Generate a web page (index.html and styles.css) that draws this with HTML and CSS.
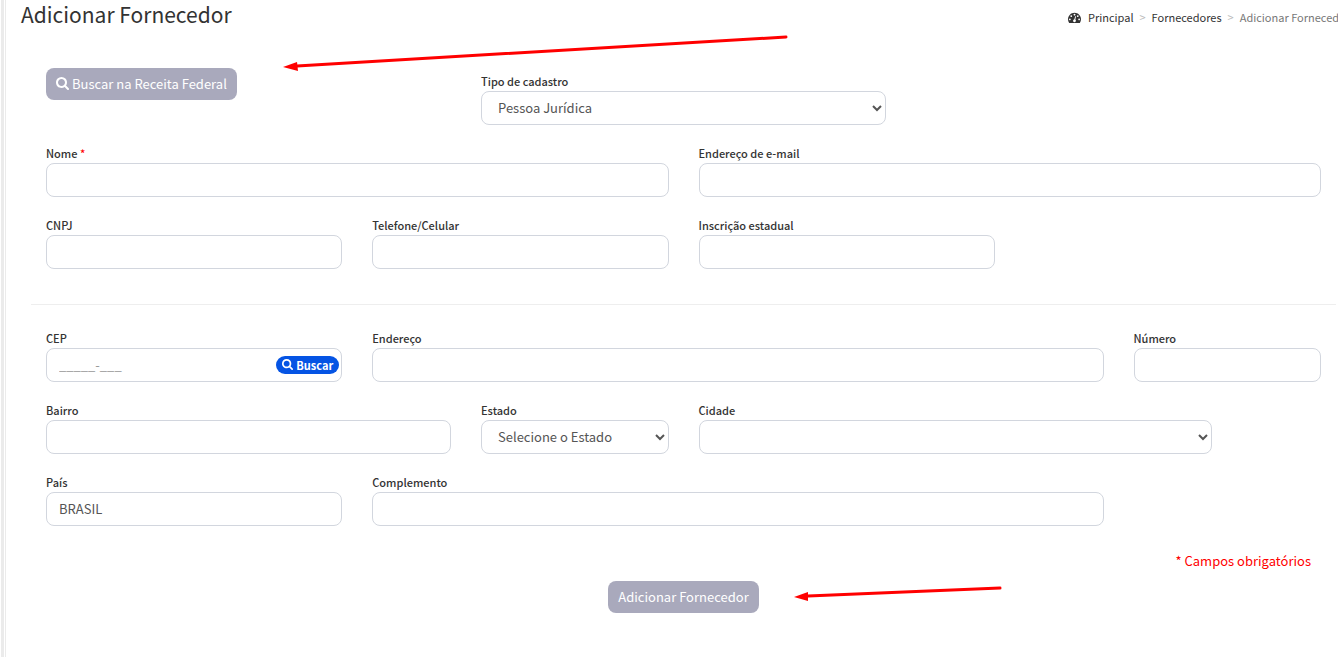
FILE: index.html
```html
<!DOCTYPE html>
<html lang="pt-BR">
<head>
  <meta charset="UTF-8">
  <title>Adicionar Fornecedor</title>
  <link rel="stylesheet" href="styles.css">
</head>
<body>

  <svg class="sprite" aria-hidden="true">
    <symbol id="icon-search" viewBox="0 0 1664 1664">
      <path d="M1152 704q0-185-131.500-316.500T704 256 387.500 387.500 256 704t131.500 316.500T704 1152t316.500-131.500T1152 704zm512 832q0 52-38 90t-90 38q-54 0-90-38l-343-342q-179 124-399 124-143 0-273.500-55.500t-225-150-150-225T0 704t55.500-273.500 150-225 225-150T704 0t273.500 55.500 225 150 150 225T1408 704q0 220-124 399l343 343q37 37 37 90z"/>
    </symbol>
    <symbol id="icon-dashboard" viewBox="0 0 1792 1792">
      <path d="M384 1152q0-53-37.500-90.500t-90.500-37.500-90.500 37.500-37.500 90.500 37.500 90.500 90.500 37.500 90.500-37.500 37.500-90.500zm192-448q0-53-37.500-90.500t-90.500-37.500-90.500 37.500-37.500 90.500 37.500 90.500 90.500 37.500 90.500-37.500 37.500-90.500zm428 481l101-382q6-26-7.500-48.500t-38.500-29.500-48 6.500-30 39.500l-101 382q-60 5-107 43.500t-63 98.500q-20 77 20 146t117 89 146-20 89-117q16-60-6-117t-72-91zm660-33q0-53-37.500-90.500t-90.500-37.500-90.500 37.500-37.500 90.500 37.500 90.500 90.500 37.500 90.500-37.500 37.500-90.500zm-640-640q0-53-37.500-90.500t-90.500-37.500-90.500 37.500-37.500 90.500 37.500 90.500 90.500 37.500 90.500-37.500 37.500-90.500zm448 192q0-53-37.500-90.500t-90.500-37.500-90.500 37.500-37.500 90.500 37.500 90.500 90.500 37.500 90.500-37.500 37.500-90.500zm320 448q0 261-141 483-19 29-54 29h-1402q-35 0-54-29-141-221-141-483 0-182 71-348t191-286 286-191 348-71 348 71 286 191 191 286 71 348z"/>
    </symbol>
  </svg>

  <div class="content-wrapper">
    <header class="content-header">
      <h1>Adicionar Fornecedor</h1>
      <nav class="breadcrumb" aria-label="Navegação">
        <a href="#"><svg class="icon icon-dashboard" aria-hidden="true"><use href="#icon-dashboard"/></svg>Principal</a>
        <a href="#">Fornecedores</a>
        <span class="active">Adicionar Fornecedor</span>
      </nav>
    </header>

    <form class="supplier-form">
      <div class="row row-top">
        <div class="col-4">
          <button type="button" class="btn"><svg class="icon icon-search" aria-hidden="true"><use href="#icon-search"/></svg>Buscar na Receita Federal</button>
        </div>
        <div class="col-4 field">
          <label for="tipo">Tipo de cadastro</label>
          <select id="tipo" class="form-control">
            <option>Pessoa Jurídica</option>
            <option>Pessoa Física</option>
          </select>
        </div>
      </div>

      <div class="row">
        <div class="col-6 field">
          <label for="nome">Nome <span class="required">*</span></label>
          <input type="text" id="nome" class="form-control">
        </div>
        <div class="col-6 field">
          <label for="email">Endereço de e-mail</label>
          <input type="email" id="email" class="form-control">
        </div>
      </div>

      <div class="row">
        <div class="col-3 field">
          <label for="cnpj">CNPJ</label>
          <input type="text" id="cnpj" class="form-control">
        </div>
        <div class="col-3 field">
          <label for="telefone">Telefone/Celular</label>
          <input type="text" id="telefone" class="form-control">
        </div>
        <div class="col-3 field">
          <label for="inscricao">Inscrição estadual</label>
          <input type="text" id="inscricao" class="form-control">
        </div>
      </div>

      <hr>

      <div class="row">
        <div class="col-3 field">
          <label for="cep">CEP</label>
          <div class="input-wrap">
            <input type="text" id="cep" class="form-control" placeholder="_____-___">
            <button type="button" class="btn-cep"><svg class="icon icon-search" aria-hidden="true"><use href="#icon-search"/></svg>Buscar</button>
          </div>
        </div>
        <div class="col-7 field">
          <label for="endereco">Endereço</label>
          <input type="text" id="endereco" class="form-control">
        </div>
        <div class="col-2 field">
          <label for="numero">Número</label>
          <input type="text" id="numero" class="form-control">
        </div>
      </div>

      <div class="row">
        <div class="col-4 field">
          <label for="bairro">Bairro</label>
          <input type="text" id="bairro" class="form-control">
        </div>
        <div class="col-2 field">
          <label for="estado">Estado</label>
          <select id="estado" class="form-control">
            <option>Selecione o Estado</option>
          </select>
        </div>
        <div class="col-5 field">
          <label for="cidade">Cidade</label>
          <select id="cidade" class="form-control">
            <option></option>
          </select>
        </div>
      </div>

      <div class="row">
        <div class="col-3 field">
          <label for="pais">País</label>
          <input type="text" id="pais" class="form-control" value="BRASIL">
        </div>
        <div class="col-7 field">
          <label for="complemento">Complemento</label>
          <input type="text" id="complemento" class="form-control">
        </div>
      </div>

      <p class="note">* Campos obrigatórios</p>

      <div class="actions">
        <button type="submit" class="btn">Adicionar Fornecedor</button>
      </div>
    </form>

    <svg class="arrow arrow-search" viewBox="0 0 506 38" aria-hidden="true">
      <path d="M14 32L503 3" stroke="#f00" stroke-width="3" stroke-linecap="round"/>
      <path d="M0 33L14 28L15 37Z" fill="#f00"/>
    </svg>
    <svg class="arrow arrow-submit" viewBox="0 0 210 18" aria-hidden="true">
      <path d="M14 11L206 3" stroke="#f00" stroke-width="3" stroke-linecap="round"/>
      <path d="M0 12L14 7L14 16Z" fill="#f00"/>
    </svg>
  </div>

</body>
</html>
```
FILE: styles.css
```css
* {
  box-sizing: border-box;
}

body {
  margin: 0 0 0 1px;
  background: #fff;
  border-left: 3px solid #ebebeb;
  color: #333;
  font-family: "Noto Sans CJK JP", "Open Sans", sans-serif;
  font-size: 13px;
  line-height: 18px;
}

.sprite {
  display: none;
}

.icon {
  fill: currentColor;
  flex: none;
}

.content-wrapper {
  position: relative;
  min-height: 100vh;
  margin-left: 1px;
  border-left: 1px solid #ebebeb;
  overflow: hidden;
}

.content-header {
  display: flex;
  justify-content: space-between;
  align-items: flex-start;
  height: 32px;
  padding-left: 15px;
}

h1 {
  margin: 0;
  font-size: 21px;
  font-weight: normal;
  line-height: 28px;
}

.breadcrumb {
  display: flex;
  margin-right: -12px;
  padding-top: 8px;
  font-size: 11px;
  white-space: nowrap;
}

.breadcrumb a {
  display: flex;
  align-items: center;
  color: #333;
  text-decoration: none;
}

.breadcrumb a::after {
  content: ">";
  padding: 0 6px;
  color: #bbb;
}

.breadcrumb .active {
  color: #777;
}

.icon-dashboard {
  width: 13px;
  height: 13px;
  margin-right: 7px;
}

.supplier-form {
  margin: 36px 2px 0 25px;
}

.row {
  display: grid;
  grid-template-columns: repeat(12, 1fr);
  column-gap: 30px;
  margin-bottom: 20px;
  padding: 0 15px;
}

.row-top .field {
  padding-top: 5px;
}

.col-2 { grid-column: span 2; }
.col-3 { grid-column: span 3; }
.col-4 { grid-column: span 4; }
.col-5 { grid-column: span 5; }
.col-6 { grid-column: span 6; }
.col-7 { grid-column: span 7; }

.field {
  min-width: 0;
}

label {
  display: block;
  margin-bottom: 2px;
  font-size: 11px;
  font-weight: 500;
  line-height: 16px;
}

.required,
.note {
  color: #f00;
}

.form-control {
  display: block;
  width: 100%;
  height: 34px;
  padding: 5px 12px 7px;
  border: 1px solid #d2d6de;
  border-radius: 8px;
  background: #fff;
  color: #555;
  font-family: inherit;
  font-size: 13px;
}

.form-control::placeholder {
  color: #999;
}

hr {
  margin: 35px 0 25px;
  border: 0;
  border-top: 1px solid #eee;
}

.input-wrap {
  position: relative;
}

.btn {
  display: inline-flex;
  align-items: center;
  height: 32px;
  padding: 0 10px 2px;
  border: 0;
  border-radius: 8px;
  background: #a9a9bc;
  color: #fff;
  font-family: inherit;
  font-size: 13px;
}

.icon-search {
  width: 13px;
  height: 13px;
  margin-right: 3px;
}

.btn-cep {
  position: absolute;
  top: 8px;
  right: 3px;
  display: flex;
  align-items: center;
  height: 18px;
  padding: 0 6px 1px;
  border: 0;
  border-radius: 9px;
  background: #0554e4;
  color: #fff;
  font-family: inherit;
  font-size: 11px;
  font-weight: bold;
}

.btn-cep .icon-search {
  width: 11px;
  height: 11px;
}

.note {
  margin: 26px 25px 11px;
  text-align: right;
}

.actions {
  text-align: center;
}

/* red arrows over the page */
.arrow {
  position: absolute;
  fill: none;
}

.arrow-search {
  top: 34px;
  left: 277px;
  width: 506px;
  height: 38px;
}

.arrow-submit {
  top: 585px;
  left: 788px;
  width: 210px;
  height: 18px;
}
```
